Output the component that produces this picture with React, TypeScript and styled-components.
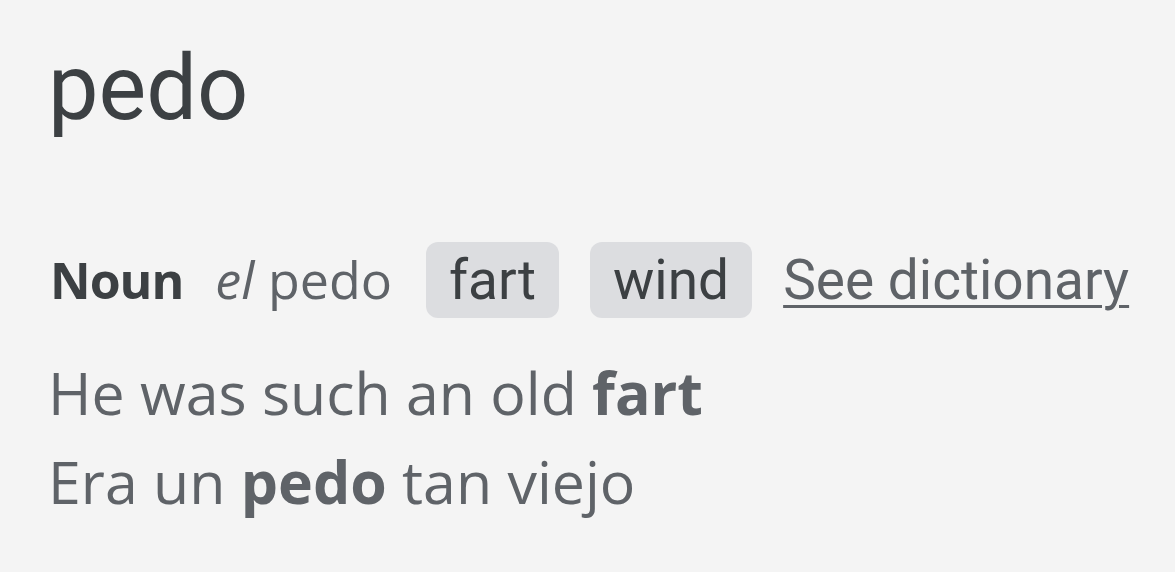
import React from "react";
import styled, { createGlobalStyle } from "styled-components";

const Global = createGlobalStyle`
  html, body { margin: 0; padding: 0; background: #f4f4f4; }
  body { font-family: Roboto, "Liberation Sans", sans-serif; }
`;

const Page = styled.div`
  width: 1175px;
  height: 572px;
  box-sizing: border-box;
  padding: 37px 40px 0 48px;
  background: #f4f4f4;
  overflow: hidden;
`;

const Headword = styled.h1`
  margin: 0;
  font-family: Roboto, sans-serif;
  font-weight: 400;
  font-size: 90px;
  line-height: 104px;
  color: #3c4043;
`;

const SenseRow = styled.div`
  display: flex;
  align-items: baseline;
  margin-top: 101px;
  white-space: nowrap;
`;

const Pos = styled.span`
  font-family: "Open Sans", sans-serif;
  font-weight: 700;
  font-size: 50px;
  line-height: 1;
  letter-spacing: -1px;
  color: #3c4043;
  margin-left: 2px;
  margin-right: 32px;
`;

const Gendered = styled.span`
  font-family: "Open Sans", sans-serif;
  font-size: 52px;
  line-height: 1;
  color: #5f6368;
  margin-right: 34px;
  em { font-style: italic; }
`;

const Chip = styled.span`
  display: inline-flex;
  align-items: center;
  height: 76px;
  padding: 0 23px;
  border-radius: 12px;
  background: #dcdde0;
  font-family: Roboto, sans-serif;
  font-size: 55px;
  line-height: 1;
  color: #3c4043;
  margin-right: 31px;
`;

const DictLink = styled.a`
  font-family: Roboto, sans-serif;
  font-size: 55px;
  line-height: 1;
  color: #5f6368;
  text-decoration: underline;
  text-decoration-thickness: 3px;
  text-underline-offset: 6px;
`;

const Example = styled.p<{ $first?: boolean }>`
  margin: ${(p) => (p.$first ? "30px" : "0")} 0 0 0;
  font-family: "Open Sans", sans-serif;
  font-size: 59px;
  line-height: 89px;
  color: #5f6368;
  white-space: nowrap;
  b { font-weight: 700; color: #5f6368; }
`;

export default function App() {
  return (
    <>
      <Global />
      <Page>
        <Headword>pedo</Headword>
        <SenseRow>
          <Pos>Noun</Pos>
          <Gendered>
            <em>el</em> pedo
          </Gendered>
          <Chip>fart</Chip>
          <Chip>wind</Chip>
          <DictLink href="#">See dictionary</DictLink>
        </SenseRow>
        <Example $first>
          He was such an old <b>fart</b>
        </Example>
        <Example>
          Era un <b>pedo</b> tan viejo
        </Example>
      </Page>
    </>
  );
}
